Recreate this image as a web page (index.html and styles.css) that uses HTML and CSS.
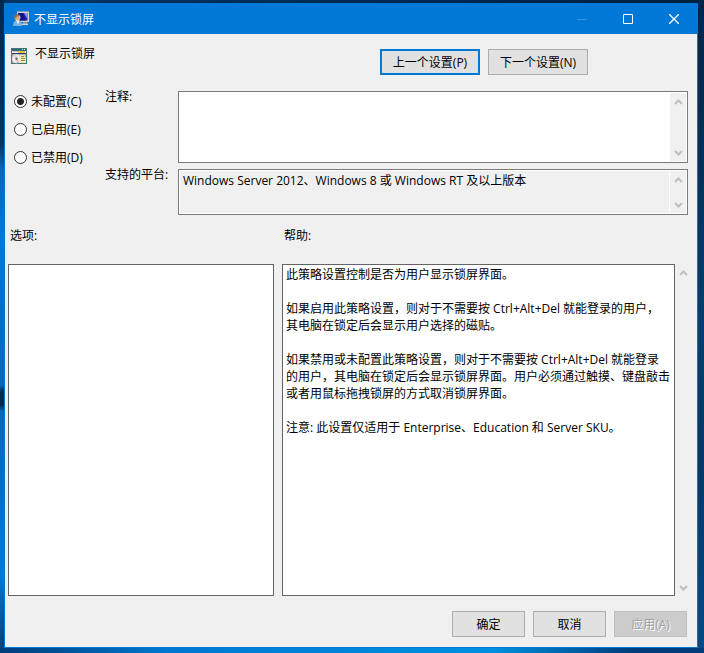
FILE: index.html
```html
<!DOCTYPE html>
<html lang="zh-CN">
<head>
<meta charset="utf-8">
<meta name="viewport" content="width=device-width, initial-scale=1">
<title>不显示锁屏</title>
<link rel="stylesheet" href="styles.css">
</head>
<body>
<main class="window">
  <header class="titlebar">
    <svg class="app-icon" viewBox="0 0 16 16" aria-hidden="true">
      <path d="M4 .5h12V11H4z" fill="#d2cfc4"/>
      <path d="M5 2h9.500v7.500H5z" fill="#1a2cc0"/>
      <path d="M5 2h5l3 7.500H5z" fill="#0a1290"/>
      <path d="M11 2h3.500v6z" fill="#7c9cf8"/>
      <path d="M10 11h4v1.500h-4z" fill="#98958a"/>
      <path d="M8.500 12.500H15V14H8.500z" fill="#d8d5ca"/>
      <path d="M0 15c0-4 1.500-6 4.500-6S9 11 9 15z" fill="#78b4dc"/>
      <path d="M3 9h3.500L5 13.500z" fill="#f0f2ec"/>
      <circle cx="4.500" cy="6.500" r="3" fill="#dcae84"/>
      <path d="M1 7C.8 2.500 6.200 2.200 7 5L4.500 5.200 2.500 7.500z" fill="#86705c"/>
    </svg>
    <h1 class="title">不显示锁屏</h1>
    <div class="window-controls">
      <button class="control" type="button" aria-label="最小化" disabled><svg viewBox="0 0 10 10"><path d="M0 5.500h10"/></svg></button>
      <button class="control" type="button" aria-label="最大化"><svg viewBox="0 0 10 10"><path d="M.5.5h9v9h-9z"/></svg></button>
      <button class="control" type="button" aria-label="关闭"><svg viewBox="0 0 10 10"><path class="cross" d="M0 0l10 10M10 0L0 10"/></svg></button>
    </div>
  </header>

  <form class="dialog">
    <div class="heading">
      <div class="policy">
        <svg class="policy-icon" viewBox="0 0 16 16" aria-hidden="true">
          <path d="M0 0h16v16H0z" fill="#3f7878"/>
          <path d="M1 1h14v2H1z" fill="#2c6c80"/>
          <path d="M11 1h1v1h-1zM13 1h1v1h-1z" fill="#c8e0e8"/>
          <path d="M1 3h14v2H1z" fill="#f3f1e2"/>
          <path d="M2 3h5v1H2z" fill="#b9c4c0"/>
          <path d="M7 3h7v2H7z" fill="#ecc23a"/>
          <path d="M1 5h14v1H1z" fill="#2a3c78"/>
          <path d="M1 6h14v9H1z" fill="#9fb4ac"/>
          <circle cx="5.500" cy="10.700" r="4.500" fill="#eceae8"/>
          <path d="M5.500 10.700L2.300 7.500A4.500 4.500 0 0 1 5.500 6.200z" fill="#c4dcc0"/>
          <path d="M5.500 10.700l3 3.200a4.500 4.500 0 0 1-3 1.300z" fill="#d4bccc"/>
          <circle cx="5.500" cy="10.700" r="1.200" fill="#5c6a6a"/>
          <path d="M9 7h5v2h1v6H8v-3h1z" fill="#f5e9b0"/>
          <path d="M10 8h3v1h-3zM10 10h4v1h-4zM10 12h4v1h-4z" fill="#a08c58"/>
        </svg>
        <h2 class="policy-name">不显示锁屏</h2>
      </div>
      <div class="navigation">
        <button class="button nav-button default" type="button">上一个设置(P)</button>
        <button class="button nav-button" type="button">下一个设置(N)</button>
      </div>
    </div>

    <div class="settings">
      <div class="states" role="radiogroup" aria-label="策略状态">
        <label class="state"><input type="radio" name="state" checked>未配置(C)</label>
        <label class="state"><input type="radio" name="state">已启用(E)</label>
        <label class="state"><input type="radio" name="state">已禁用(D)</label>
      </div>
      <div class="fields">
        <label for="comment">注释:</label>
        <div class="field">
          <textarea id="comment" rows="3"></textarea>
          <div class="scrollbar">
            <svg viewBox="0 0 9 6"><path d="M1 5l3.500-3.500L8 5"/></svg>
            <svg viewBox="0 0 9 6"><path d="M1 1l3.500 3.500L8 1"/></svg>
          </div>
        </div>
        <label for="platform">支持的平台:</label>
        <div class="field readonly">
          <textarea id="platform" rows="2" readonly>Windows Server 2012、Windows 8 或 Windows RT 及以上版本</textarea>
          <div class="scrollbar">
            <svg viewBox="0 0 9 6"><path d="M1 5l3.500-3.500L8 5"/></svg>
            <svg viewBox="0 0 9 6"><path d="M1 1l3.500 3.500L8 1"/></svg>
          </div>
        </div>
      </div>
    </div>

    <div class="panels">
      <section class="options">
        <h3 class="panel-title">选项:</h3>
        <div class="panel"></div>
      </section>
      <section class="help">
        <h3 class="panel-title">帮助:</h3>
        <div class="help-body">
          <div class="panel help-text">
            <p>此策略设置控制是否为用户显示锁屏界面。</p>
            <p>如果启用此策略设置，则对于不需要按 Ctrl+Alt+Del 就能登录的用户，<br>其电脑在锁定后会显示用户选择的磁贴。</p>
            <p>如果禁用或未配置此策略设置，则对于不需要按 Ctrl+Alt+Del 就能登录<br>的用户，其电脑在锁定后会显示锁屏界面。用户必须通过触摸、键盘敲击<br>或者用鼠标拖拽锁屏的方式取消锁屏界面。</p>
            <p>注意: 此设置仅适用于 Enterprise、Education 和 Server SKU。</p>
          </div>
          <div class="scrollbar">
            <svg viewBox="0 0 9 6"><path d="M1 5l3.500-3.500L8 5"/></svg>
            <svg viewBox="0 0 9 6"><path d="M1 1l3.500 3.500L8 1"/></svg>
          </div>
        </div>
      </section>
    </div>

    <footer class="actions">
      <button class="button" type="button">确定</button>
      <button class="button" type="button">取消</button>
      <button class="button" type="button" disabled>应用(A)</button>
    </footer>
  </form>
</main>
</body>
</html>
```

FILE: styles.css
```css
* {
  box-sizing: border-box;
}

body {
  display: flex;
  min-height: 100vh;
  margin: 0;
  padding: 3px 6px 5px 4px;
  background:
    linear-gradient(to right, #003d79, #0078d0 24%, #0090e0 70%, #003c7a 90%) bottom / 100% 5px no-repeat,
    linear-gradient(#002448, #003f75 50%, #00386c 70%, #004b8c) right / 6px 100% no-repeat,
    linear-gradient(#00284f, #003566 22%, #0068bd 26%, #0078d7 36%, #0068bd 59%, #002b55 60%, #002b55 62%, #0068bd 63%, #0078d7 88%, #003d79) left / 4px 100% no-repeat,
    linear-gradient(to right, #003464, #00203f);
  color: #000;
  font: 12px/17px "Open Sans", "Noto Sans CJK SC", sans-serif;
}

h1,
h2,
h3,
p {
  margin: 0;
  font-size: 12px;
  font-weight: 400;
}

button,
textarea {
  color: inherit;
  font: inherit;
}

.window {
  display: flex;
  flex: 1;
  flex-direction: column;
  min-width: 0;
  border: 1px solid #0078d7;
  background: #f0f0f0;
}

.titlebar {
  display: flex;
  align-items: center;
  height: 30px;
  padding-left: 8px;
  background: #0078d7;
  color: #fff;
}

.app-icon,
.policy-icon {
  flex: none;
  width: 16px;
  height: 16px;
}

.title {
  flex: 1;
  margin-left: 5px;
}

.window-controls {
  display: flex;
}

.control {
  display: grid;
  place-items: center;
  width: 46px;
  height: 30px;
  padding: 0;
  border: 0;
  background: none;
}

.control svg {
  width: 10px;
  height: 10px;
  fill: none;
  stroke: #fff;
}

.control:disabled svg {
  stroke: #3c98e0;
}

.control .cross {
  stroke-width: 1.3;
}

.dialog {
  display: flex;
  flex: 1;
  flex-direction: column;
  padding: 12px 9px 10px 3px;
}

.heading {
  display: grid;
  grid-template-columns: 372fr 308fr;
  padding-top: 3px;
}

.policy {
  display: flex;
  align-items: flex-start;
  gap: 8px;
  margin-top: -4px;
  padding-left: 3px;
}

.policy-icon {
  margin-top: 3px;
}

.navigation {
  display: flex;
  gap: 8px;
}

.button {
  width: 73px;
  height: 26px;
  padding: 0;
  border: 1px solid #adadad;
  background: #e1e1e1;
}

.nav-button {
  width: 100px;
}

.button.default {
  border: 2px solid #0078d7;
}

.button:disabled {
  border-color: #bfbfbf;
  background: #ccc;
  color: #a0a0a0;
  text-shadow: 1px 1px #fff;
}

.settings {
  display: flex;
  gap: 16px;
  margin-top: 16px;
}

.states {
  display: flex;
  flex: none;
  flex-direction: column;
  gap: 11px;
  width: 81px;
  padding: 2px 0 0 6px;
}

.state {
  display: flex;
  align-items: center;
  gap: 4px;
  white-space: nowrap;
}

.state input {
  width: 13px;
  height: 13px;
  margin: 0;
  border: 1px solid #333;
  border-radius: 50%;
  background: #fff;
  appearance: none;
}

.state input:checked {
  background: radial-gradient(circle, #222 3px, #fff 4px);
}

.fields {
  display: grid;
  flex: 1;
  grid-template-columns: 69px 1fr;
  gap: 6px 4px;
}

.fields label {
  margin-top: -3px;
  white-space: nowrap;
}

.field {
  display: flex;
  min-width: 0;
  height: 72px;
  padding: 1px;
  border: 1px solid #7a7a7a;
  background: #fff;
}

.field.readonly {
  height: 46px;
}

.field textarea {
  flex: 1;
  min-width: 0;
  padding: 1px 3px;
  border: 0;
  outline: 0;
  background: #fff;
  overflow: hidden;
  resize: none;
}

.field.readonly textarea {
  background: #f0f0f0;
}

.scrollbar {
  display: flex;
  flex: none;
  flex-direction: column;
  align-items: center;
  justify-content: space-between;
  width: 16px;
  padding: 6px 0 5px;
  background: #f0f0f0;
}

.field .scrollbar {
  margin-left: 1px;
}

.scrollbar svg {
  width: 9px;
  height: 6px;
  fill: none;
  stroke: #bfbfbf;
  stroke-width: 2;
}

.panels {
  display: grid;
  flex: 1;
  grid-template-columns: 266fr 409fr;
  gap: 8px;
  margin: 12px -3px 0 0;
}

.options,
.help {
  display: flex;
  flex-direction: column;
  gap: 20px;
  min-width: 0;
}

.panel-title {
  padding-left: 2px;
}

.panel {
  flex: 1;
  border: 1px solid #646464;
  background: #fff;
}

.help-body {
  display: flex;
  flex: 1;
}

.help-text {
  display: flex;
  flex-direction: column;
  gap: 17px;
  min-width: 0;
  padding: 1px 3px;
}

.actions {
  display: flex;
  justify-content: flex-end;
  gap: 8px;
  margin-top: 15px;
  padding-right: 1px;
}
```
